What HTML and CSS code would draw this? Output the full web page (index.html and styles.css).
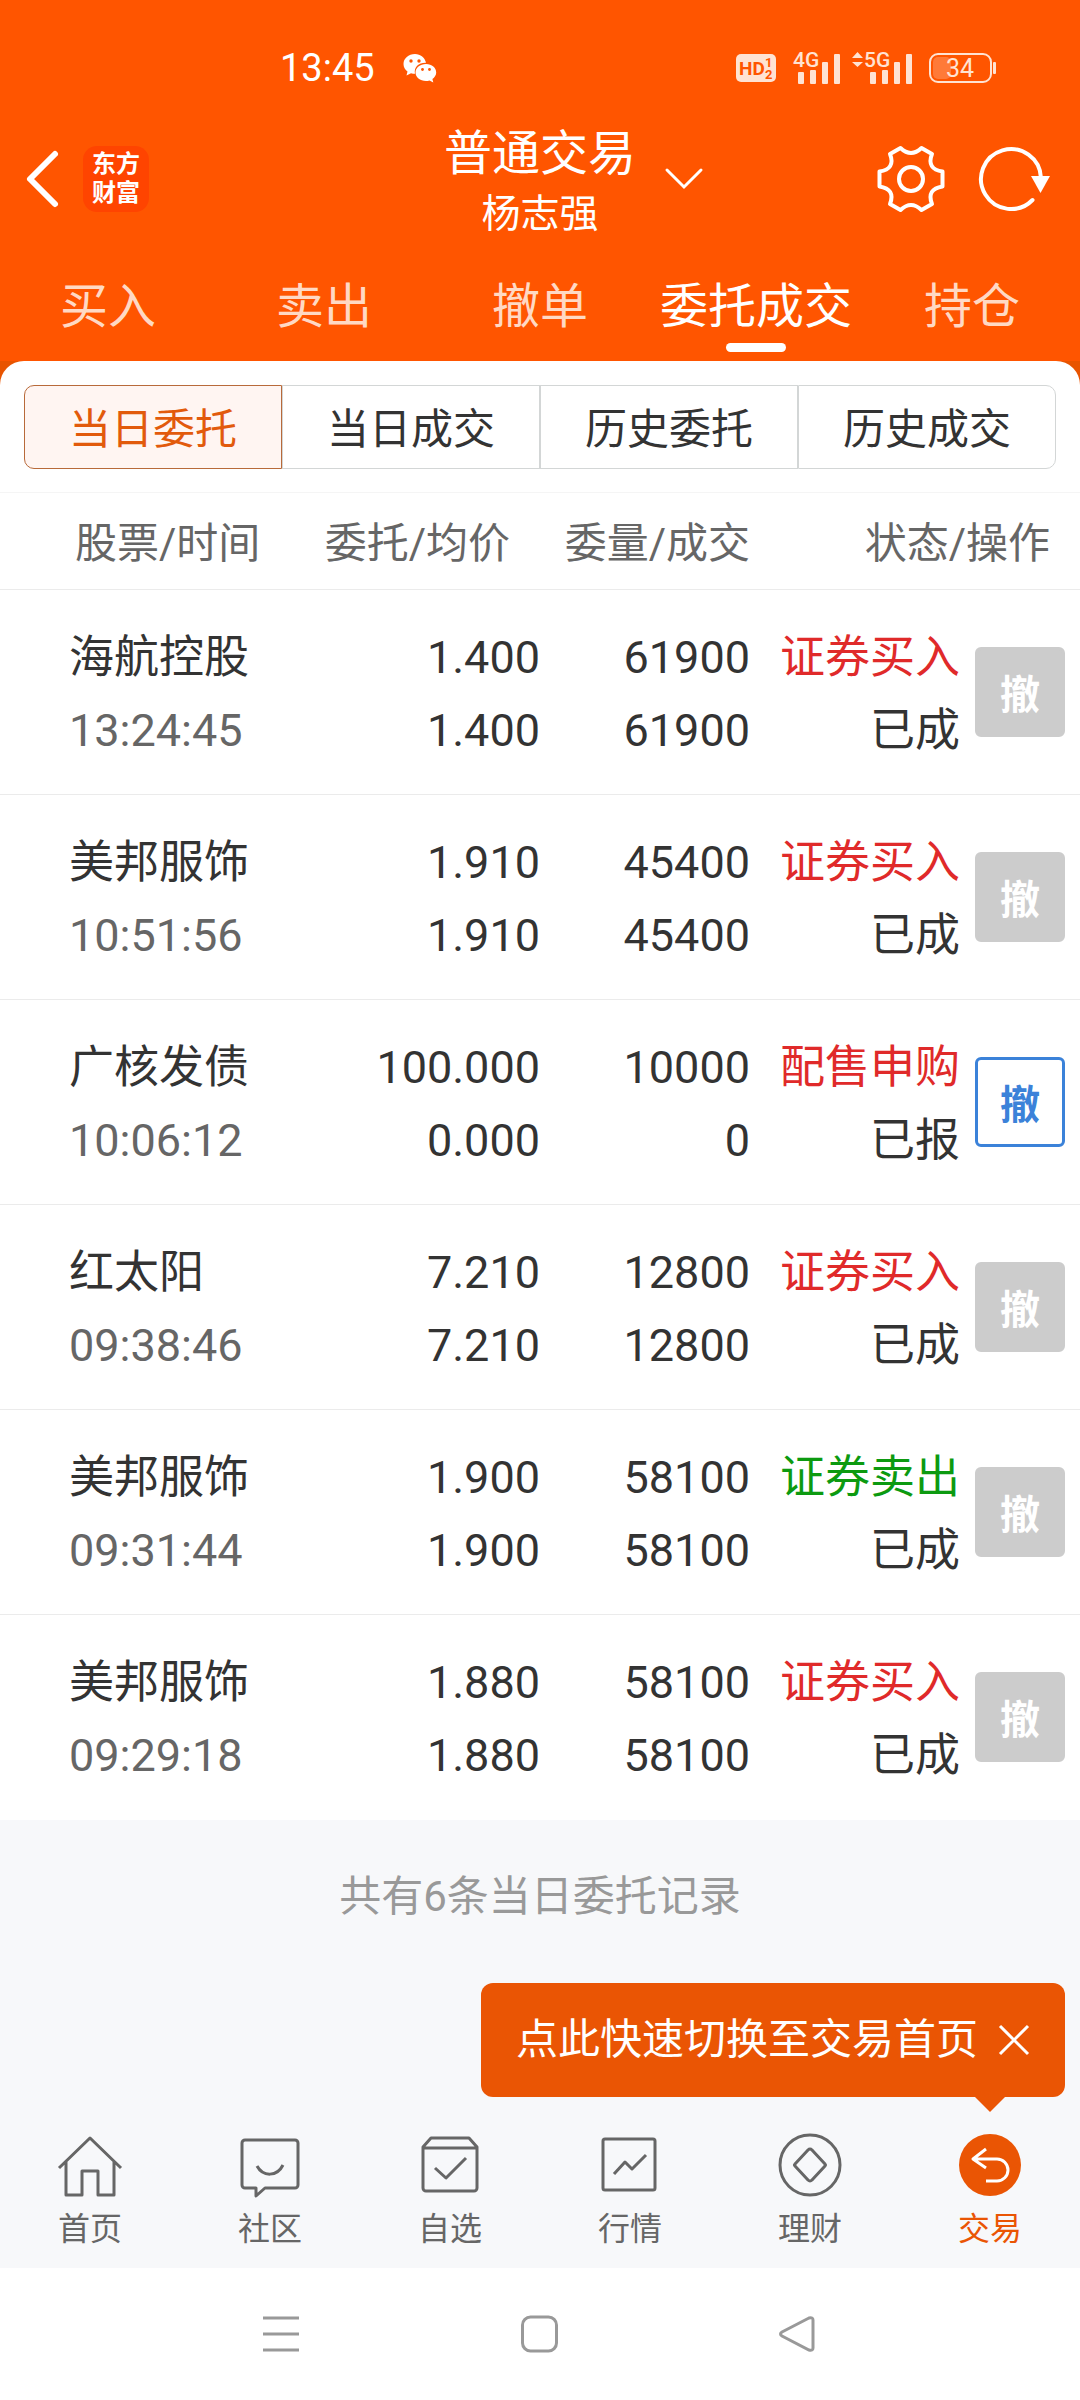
FILE: index.html
```html
<!DOCTYPE html>
<html lang="zh-CN">
<head>
    <meta charset="UTF-8">
    <meta name="viewport" content="width=device-width, initial-scale=1.0">
    <title>普通交易</title>
    <link rel="stylesheet" href="styles.css">
</head>
<body>

    <!-- Header -->
    <header class="header">
        <div class="status-bar">
            <div class="status-left">
                <span class="clock">13:45</span>
                <svg class="wechat" width="34" height="30" viewBox="0 0 34 30">
                    <path fill="#fff" d="M12 1C5.500 1 .5 5.500.5 11c0 3 1.500 5.700 4 7.500L3.500 22.500l4.500-2.300c1.500.4 2.500.6 4 .6 C10.500 14 16 9.500 23 9.800 22 4.500 17.500 1 12 1z"/>
                    <path fill="#fff" d="M23 11c-6 0-10.500 3.800-10.500 8.500S17 28 23 28c1.200 0 2.300-.1 3.500-.5l3.800 2-.9-3.500c2.300-1.600 3.800-3.900 3.800-6.500C33.200 14.800 29 11 23 11z"/>
                    <g fill="#ff5500"><circle cx="8" cy="8" r="1.700"/><circle cx="16" cy="8" r="1.700"/><circle cx="19.500" cy="16.500" r="1.400"/><circle cx="26.500" cy="16.500" r="1.400"/></g>
                </svg>
            </div>
            <div class="status-right">
                <svg width="40" height="32" viewBox="0 0 40 32">
                    <rect y="2" width="40" height="28" rx="5" fill="#ffe3d3"/>
                    <text class="hd" x="3" y="23">HD</text>
                    <text class="hd-sub" x="29" y="15">1</text>
                    <text class="hd-sub" x="29" y="27">2</text>
                </svg>
                <svg width="48" height="48" viewBox="-5 -6 48 48">
                    <text class="net" x="-2" y="17">4G</text>
                    <g fill="#ffe3d3"><rect x="3" y="22" width="6" height="12" rx="1"/><rect x="15" y="20" width="6" height="14" rx="1"/><rect x="27" y="12" width="6" height="22" rx="1"/><rect x="39" y="4" width="6" height="30" rx="1"/></g>
                </svg>
                <svg width="62" height="48" viewBox="0 -6 62 48">
                    <path fill="#ffe3d3" d="M0 8l5.500-6L11 8zM0 12h11l-5.500 5z"/>
                    <text class="net" x="12" y="17">5G</text>
                    <g fill="#ffe3d3"><rect x="18" y="22" width="6" height="12" rx="1"/><rect x="30" y="20" width="6" height="14" rx="1"/><rect x="42" y="12" width="6" height="22" rx="1"/><rect x="54" y="4" width="6" height="30" rx="1"/></g>
                </svg>
                <svg width="68" height="32" viewBox="0 0 68 32">
                    <rect x="5" y="5" width="18" height="22" rx="5" fill="#ff7a38"/>
                    <rect x="2" y="2" width="61" height="28" rx="8" fill="none" stroke="#ffe3d3" stroke-width="2"/>
                    <rect x="65" y="10" width="3" height="12" rx="1" fill="#ffe3d3"/>
                    <text class="level" x="32" y="25">34</text>
                </svg>
            </div>
        </div>

        <div class="title-bar">
            <div class="title-left">
                <button class="icon-btn" aria-label="返回">
                    <svg width="34" height="58" viewBox="0 0 34 58"><path d="M30 4L5 29l25 25" fill="none" stroke="#fff" stroke-width="6" stroke-linecap="round" stroke-linejoin="round"/></svg>
                </button>
                <div class="logo">东方<br>财富</div>
            </div>
            <div class="title">
                <h1>普通交易</h1>
                <p>杨志强</p>
            </div>
            <div class="title-right">
                <button class="icon-btn" aria-label="切换账户">
                    <svg width="38" height="22" viewBox="0 0 38 22"><path d="M2 2l17 17L36 2" fill="none" stroke="#fff" stroke-width="3" stroke-linecap="round"/></svg>
                </button>
                <div class="tools">
                    <button class="icon-btn" aria-label="设置">
                        <svg width="68" height="68" viewBox="-34 -34 68 68"><g fill="none" stroke="#fff" stroke-width="4" stroke-linejoin="round"><path d="M-10.500-31Q0-21 10.500-31L21-25C17-15 21-9 31.500-7.500V7.500C21 9 17 15 21 25L10.500 31Q0 21-10.500 31L-21 25C-17 15-21 9-31.500 7.500V-7.500C-21-9-17-15-21-25Z"/><circle r="12"/></g></svg>
                    </button>
                    <button class="icon-btn" aria-label="刷新">
                        <svg width="72" height="68" viewBox="-32 -34 72 68"><path d="M21.500 21A30 30 0 1 1 30-1" fill="none" stroke="#fff" stroke-width="4" stroke-linecap="round"/><path d="M20-3h19L29.500 14z" fill="#fff"/></svg>
                    </button>
                </div>
            </div>
        </div>

        <nav class="tabs">
            <a href="#">买入</a>
            <a href="#">卖出</a>
            <a href="#">撤单</a>
            <a href="#" class="active">委托成交</a>
            <a href="#">持仓</a>
        </nav>
    </header>

    <!-- Orders -->
    <main>
        <div class="panel-wrap">
            <section class="panel">
                <div class="segments">
                    <button class="active">当日委托</button>
                    <button>当日成交</button>
                    <button>历史委托</button>
                    <button>历史成交</button>
                </div>
                <table class="orders">
                    <colgroup>
                        <col class="col-name">
                        <col class="col-price">
                        <col class="col-num">
                        <col class="col-state">
                        <col class="col-action">
                    </colgroup>
                    <thead>
                        <tr>
                            <th class="name">股票/时间</th>
                            <th class="price">委托/均价</th>
                            <th>委量/成交</th>
                            <th colspan="2" class="state">状态/操作</th>
                        </tr>
                    </thead>
                    <tbody>
                        <tr>
                            <td class="name">海航控股<br><span class="time">13:24:45</span></td>
                            <td>1.400<br>1.400</td>
                            <td>61900<br>61900</td>
                            <td><span class="buy">证券买入</span><br>已成</td>
                            <td class="action"><button class="cancel" disabled>撤</button></td>
                        </tr>
                        <tr>
                            <td class="name">美邦服饰<br><span class="time">10:51:56</span></td>
                            <td>1.910<br>1.910</td>
                            <td>45400<br>45400</td>
                            <td><span class="buy">证券买入</span><br>已成</td>
                            <td class="action"><button class="cancel" disabled>撤</button></td>
                        </tr>
                        <tr>
                            <td class="name">广核发债<br><span class="time">10:06:12</span></td>
                            <td>100.000<br>0.000</td>
                            <td>10000<br>0</td>
                            <td><span class="buy">配售申购</span><br>已报</td>
                            <td class="action"><button class="cancel">撤</button></td>
                        </tr>
                        <tr>
                            <td class="name">红太阳<br><span class="time">09:38:46</span></td>
                            <td>7.210<br>7.210</td>
                            <td>12800<br>12800</td>
                            <td><span class="buy">证券买入</span><br>已成</td>
                            <td class="action"><button class="cancel" disabled>撤</button></td>
                        </tr>
                        <tr>
                            <td class="name">美邦服饰<br><span class="time">09:31:44</span></td>
                            <td>1.900<br>1.900</td>
                            <td>58100<br>58100</td>
                            <td><span class="sell">证券卖出</span><br>已成</td>
                            <td class="action"><button class="cancel" disabled>撤</button></td>
                        </tr>
                        <tr>
                            <td class="name">美邦服饰<br><span class="time">09:29:18</span></td>
                            <td>1.880<br>1.880</td>
                            <td>58100<br>58100</td>
                            <td><span class="buy">证券买入</span><br>已成</td>
                            <td class="action"><button class="cancel" disabled>撤</button></td>
                        </tr>
                    </tbody>
                </table>
            </section>
        </div>

        <p class="summary">共有6条当日委托记录</p>

        <div class="tip">
            <span>点此快速切换至交易首页</span>
            <button class="icon-btn" aria-label="关闭">
                <svg width="32" height="32" viewBox="0 0 32 32"><path d="M2 2l28 28M30 2L2 30" stroke="#fff" stroke-width="3"/></svg>
            </button>
        </div>
    </main>

    <!-- Bottom Navigation -->
    <nav class="bottom-nav">
        <a href="#">
            <svg width="64" height="64" viewBox="0 0 64 64"><path d="M1 35L32 5l31 30M8 29v33h16V38h16v24h16V29"/></svg>
            首页
        </a>
        <a href="#">
            <svg width="64" height="64" viewBox="0 0 64 64"><path d="M7 7h50a3 3 0 0 1 3 3v42a3 3 0 0 1-3 3H27l-9 8v-8H7a3 3 0 0 1-3-3V10a3 3 0 0 1 3-3zM19 33c6 11 20 11 26-1"/></svg>
            社区
        </a>
        <a href="#">
            <svg width="64" height="64" viewBox="0 0 64 64"><path d="M5 14l8-9h38l8 9v41a3 3 0 0 1-3 3H8a3 3 0 0 1-3-3zM5 15h54M17 35l11 10 20-20"/></svg>
            自选
        </a>
        <a href="#">
            <svg width="64" height="64" viewBox="0 0 64 64"><rect x="5" y="6" width="52" height="51" rx="2"/><path d="M16 41l11-12 7 7 14-14"/></svg>
            行情
        </a>
        <a href="#">
            <svg width="64" height="64" viewBox="0 0 64 64"><circle cx="32" cy="32" r="30"/><path d="M30 17q2-2 4 0l13 14q1 1 0 2L34 47q-2 2-4 0L17 33q-1-1 0-2z"/></svg>
            理财
        </a>
        <a href="#" class="active">
            <svg width="64" height="64" viewBox="0 0 64 64"><circle cx="32" cy="32" r="31" class="disc"/><path class="arrow" d="M28 16L15 26l13 9M15 26h24a11 11 0 0 1 0 22H28"/></svg>
            交易
        </a>
    </nav>

    <!-- System Navigation -->
    <div class="system-nav">
        <button class="icon-btn" aria-label="菜单">
            <svg width="38" height="38" viewBox="0 0 38 38"><path d="M0 3h36M0 19h36M0 35h36"/></svg>
        </button>
        <button class="icon-btn" aria-label="主页">
            <svg width="38" height="38" viewBox="0 0 38 38"><rect x="1.500" y="2" width="34" height="34" rx="8"/></svg>
        </button>
        <button class="icon-btn" aria-label="后退">
            <svg width="38" height="38" viewBox="0 0 38 38"><path d="M30 3L3 17q-3 2 0 4l27 14q4 1 4-2V5q0-3-4-2z"/></svg>
        </button>
    </div>

</body>
</html>
```
FILE: styles.css
```css
* {
    box-sizing: border-box;
}

body {
    font-family: Roboto, "Noto Sans CJK SC", sans-serif;
    margin: 0;
    min-height: 100vh;
    display: flex;
    flex-direction: column;
    background-color: #fff;
    color: #333;
}

h1, p {
    margin: 0;
    font-weight: normal;
}

a {
    color: inherit;
    text-decoration: none;
}

button {
    font-family: inherit;
    padding: 0;
    cursor: pointer;
}

svg {
    display: block;
    overflow: visible;
}

.icon-btn {
    background: none;
    border: none;
}

/* Header */
.header {
    background-color: #ff5500;
    color: #fff;
}

.status-bar {
    display: flex;
    justify-content: space-between;
    align-items: center;
    padding: 40px 84px 18px 280px;
    line-height: 56px;
}

.status-left, .status-right {
    display: flex;
    align-items: center;
}

.status-left {
    gap: 28px;
}

.status-right {
    gap: 14px;
}

.clock {
    font-size: 38px;
}

.hd {
    font-size: 19px;
    font-weight: bold;
    fill: #ff5500;
}

.hd-sub {
    font-size: 13px;
    font-weight: bold;
    fill: #ff5500;
}

.net {
    font-size: 21px;
    font-weight: 500;
    fill: #ffe3d3;
}

.level {
    font-size: 25px;
    text-anchor: middle;
    fill: #ffe3d3;
}

.title-bar {
    display: grid;
    grid-template-columns: 1fr auto 1fr;
    align-items: center;
}

.title-left {
    display: flex;
    align-items: center;
    gap: 24px;
    padding-left: 25px;
}

.logo {
    padding: 4px 9px;
    border-radius: 14px;
    background-color: #ff4400;
    font-size: 24px;
    font-weight: bold;
    line-height: 29px;
}

.title {
    padding-top: 10px;
    text-align: center;
    line-height: 60px;
}

.title h1 {
    font-size: 48px;
}

.title p {
    font-size: 39px;
}

.title-right {
    display: flex;
    justify-content: space-between;
    align-items: center;
    padding: 0 29px;
}

.tools {
    display: flex;
    gap: 34px;
}

.tabs {
    display: grid;
    grid-template-columns: repeat(5, 1fr);
    padding: 27px 0 9px;
    font-size: 48px;
    line-height: 72px;
    text-align: center;
}

.tabs a {
    color: #ffd9c4;
}

.tabs a::after {
    content: "";
    display: block;
    width: 60px;
    height: 9px;
    margin: 0 auto;
    border-radius: 5px;
}

.tabs .active {
    color: #fff;
}

.tabs .active::after {
    background-color: #fff;
}

/* Orders */
main {
    flex: 1;
    display: flex;
    flex-direction: column;
    background-color: #f7f8fa;
}

.panel-wrap {
    background: linear-gradient(#e85400 24px, #fff 24px);
}

.panel {
    padding-top: 24px;
    border-radius: 24px 24px 0 0;
    background-color: #fff;
}

.segments {
    display: grid;
    grid-template-columns: repeat(4, 1fr);
    padding: 0 24px 23px;
}

.segments button {
    height: 84px;
    padding-bottom: 4px;
    border: 1px solid #d3d6d6;
    background-color: #fff;
    color: #333;
    font-size: 42px;
}

.segments button:first-child {
    border-radius: 10px 0 0 10px;
}

.segments button:last-child {
    border-radius: 0 10px 10px 0;
}

.segments .active {
    border-color: #b86a3a;
    background-color: #fff5f2;
    color: #e25a0c;
}

.orders {
    width: 100%;
    table-layout: fixed;
    border-collapse: separate;
    border-spacing: 0;
    border-top: 1px solid #f5f5f5;
    text-align: right;
}

.col-name {
    width: 27%;
}

.col-price {
    width: 23%;
}

.orders th {
    height: 97px;
    padding: 0 0 4px;
    border-bottom: 1px solid #ebebeb;
    color: #666;
    font-size: 42px;
    font-weight: normal;
}

.orders th.name {
    padding-left: 75px;
    text-align: left;
}

.orders th.price, .orders th.state {
    padding-right: 30px;
}

.orders td {
    padding: 31px 0 27px;
    border-bottom: 1px solid #ebebeb;
    font-size: 45px;
    line-height: 73px;
    white-space: nowrap;
}

.orders td.name {
    padding-left: 69px;
    text-align: left;
}

.orders tr:last-child td {
    border-bottom-color: #fff;
}

.col-action {
    width: 120px;
}

.time {
    color: #666;
}

.buy {
    color: #e02a2a;
}

.sell {
    color: #0c9a10;
}

.orders td.action {
    padding: 0 15px 0 0;
}

.cancel {
    display: block;
    width: 90px;
    height: 90px;
    margin-left: auto;
    border: 3px solid #3b82d9;
    border-radius: 6px;
    background-color: #fff;
    color: #3b82d9;
    font-size: 40px;
    font-weight: bold;
}

.cancel:disabled {
    border-color: #ccc;
    background-color: #ccc;
    color: #fff;
}

.summary {
    padding: 47px 0 56px;
    color: #999;
    font-size: 42px;
    line-height: 60px;
    text-align: center;
}

.tip {
    position: relative;
    align-self: flex-end;
    display: flex;
    align-items: center;
    gap: 20px;
    margin: 0 15px 15px;
    padding: 27px 35px;
    border-radius: 12px;
    background-color: #ea5504;
    color: #fff;
    font-size: 42px;
    line-height: 60px;
}

.tip::after {
    content: "";
    position: absolute;
    top: 100%;
    right: 60px;
    border: 15px solid transparent;
    border-top-color: #ea5504;
    border-bottom: none;
}

/* Bottom Navigation */
.bottom-nav {
    display: grid;
    grid-template-columns: repeat(6, 1fr);
    padding: 21px 0 17px;
    background-color: #f7f8fa;
    color: #666;
    font-size: 32px;
    line-height: 44px;
}

.bottom-nav a {
    display: flex;
    flex-direction: column;
    align-items: center;
    gap: 10px;
}

.bottom-nav svg {
    fill: none;
    stroke: #666;
    stroke-width: 3;
    stroke-linejoin: round;
}

.bottom-nav .active {
    color: #ea5504;
}

.bottom-nav .disc {
    fill: #ea5504;
    stroke: none;
}

.bottom-nav .arrow {
    stroke: #fff;
}

/* System Navigation */
.system-nav {
    display: flex;
    justify-content: center;
    gap: 220px;
    padding: 47px 0;
}

.system-nav svg {
    fill: none;
    stroke: #999;
    stroke-width: 3;
}
```
